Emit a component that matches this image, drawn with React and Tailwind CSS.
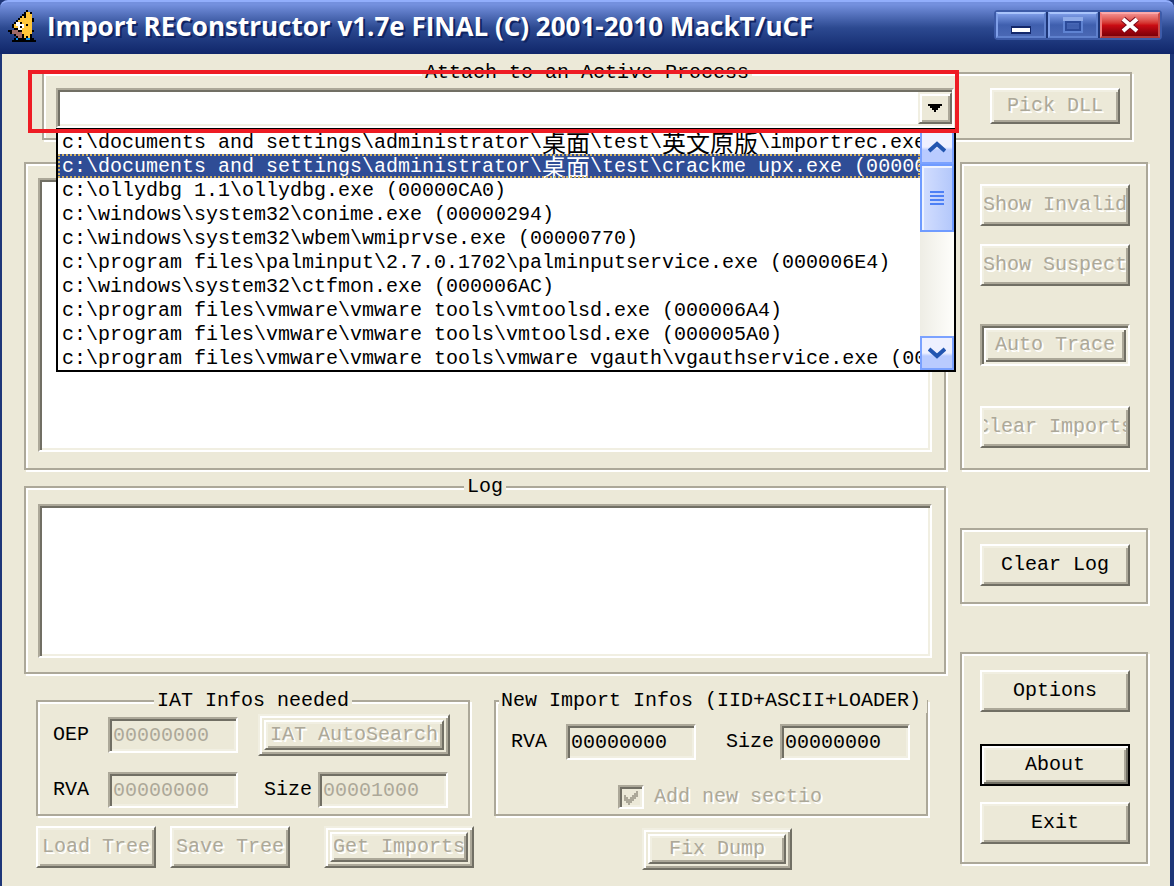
import clsx from "clsx";

const processes = [
  { path: ["c:\\documents and settings\\administrator\\", "桌面", "\\test\\", "英文原版", "\\importrec.exe"] },
  { path: ["c:\\documents and settings\\administrator\\", "桌面", "\\test\\crackme upx.exe (000005E8)"], selected: true },
  { path: ["c:\\ollydbg 1.1\\ollydbg.exe (00000CA0)"] },
  { path: ["c:\\windows\\system32\\conime.exe (00000294)"] },
  { path: ["c:\\windows\\system32\\wbem\\wmiprvse.exe (00000770)"] },
  { path: ["c:\\program files\\palminput\\2.7.0.1702\\palminputservice.exe (000006E4)"] },
  { path: ["c:\\windows\\system32\\ctfmon.exe (000006AC)"] },
  { path: ["c:\\program files\\vmware\\vmware tools\\vmtoolsd.exe (000006A4)"] },
  { path: ["c:\\program files\\vmware\\vmware tools\\vmtoolsd.exe (000005A0)"] },
  { path: ["c:\\program files\\vmware\\vmware tools\\vmware vgauth\\vgauthservice.exe (00000588)"] }
];

// Bevels
const etched = "border-2 border-[#aca899] shadow-[inset_2px_2px_0_#fff,2px_2px_0_#fff]";
const sunken =
  "border-2 border-t-[#aca899] border-l-[#aca899] border-r-white border-b-white shadow-[inset_2px_2px_0_#716f64,inset_-2px_-2px_0_#f1efe2]";
const raised =
  "border-2 border-t-white border-l-white border-r-[#716f64] border-b-[#716f64] shadow-[inset_2px_2px_0_#f1efe2,inset_-2px_-2px_0_#aca899]";
const raisedEdge =
  "border-2 border-t-[#f1efe2] border-l-[#f1efe2] border-r-[#716f64] border-b-[#716f64] shadow-[inset_2px_2px_0_#fff,inset_-2px_-2px_0_#aca899]";
const focused =
  "border-2 border-black shadow-[inset_2px_2px_0_#fff,inset_-2px_-2px_0_#716f64,inset_4px_4px_0_#f1efe2,inset_-4px_-4px_0_#aca899]";
const framed =
  "border-2 border-t-[#aca899] border-l-[#aca899] border-r-white border-b-white shadow-[inset_2px_2px_0_#716f64,inset_-2px_-2px_0_#f1efe2,inset_4px_4px_0_#fff,inset_-4px_-4px_0_#716f64,inset_6px_6px_0_#f1efe2,inset_-6px_-6px_0_#aca899]";

const disabledText = "text-[#aca899] [text-shadow:2px_2px_0_#fff]";

function Button({ children, disabled, bevel = raised, className }) {
  return (
    <button disabled={disabled} className={clsx("block bg-[#ece9d8] px-0.5", bevel, className)}>
      <span
        className={clsx(
          "flex justify-center overflow-hidden whitespace-nowrap leading-6",
          disabled && disabledText
        )}
      >
        <span className="shrink-0">{children}</span>
      </span>
    </button>
  );
}

// Button sitting inside an extra raised window edge
function EdgeButton({ children, className }) {
  return (
    <div className={clsx("h-[42px] p-1", raisedEdge, className)}>
      <Button disabled className="h-full w-full">
        {children}
      </Button>
    </div>
  );
}

function Group({ title, legendClass, className, children }) {
  return (
    <fieldset className={clsx("min-w-0", etched, className)}>
      <legend className={clsx("h-6 bg-[#ece9d8] text-center leading-6 whitespace-nowrap", legendClass)}>
        {title}
      </legend>
      {children}
    </fieldset>
  );
}

function Field({ id, label, value, disabled, labelClass }) {
  return (
    <>
      <label htmlFor={id} className={clsx("shrink-0", labelClass)}>
        {label}
      </label>
      <input
        id={id}
        defaultValue={value}
        disabled={disabled}
        className={clsx(
          "h-9 w-[130px] shrink-0 bg-[#ece9d8] px-[3px] outline-none",
          sunken,
          disabled && "text-[#aca899]"
        )}
      />
    </>
  );
}

const birdRows = [
  ".........K....",
  "........KYYK..",
  ".......KKYYY..",
  "......KYKYYY..",
  ".....KYYYYYYK.",
  "....KYYYYYYYK.",
  "...KWWKYYYYY..",
  "..KYWWWWYKYY..",
  "..KYYWKWYYYY..",
  "...KKWWYYYYY..",
  "KKPPPKKYYYYYK.",
  ".KPPPPPYYYYY..",
  "...KPPPKYYYK..",
  "....KPPKYKYK..",
  "...KBKKKKBBKK.",
  "..KKKKKKKKKKKK"
];
const birdColors = { K: "#000", Y: "#ffc63a", W: "#fff", P: "#a06a66", B: "#0a94f0" };

function BirdIcon() {
  return (
    <svg viewBox="0 0 14 16" className="h-8 w-7 shrink-0" shapeRendering="crispEdges" aria-hidden="true">
      {birdRows.flatMap((row, y) =>
        [...row].map((c, x) =>
          c === "." ? null : <rect key={`${x}-${y}`} x={x} y={y} width="1" height="1" fill={birdColors[c]} />
        )
      )}
    </svg>
  );
}

function TitleBar() {
  const blue =
    "flex h-[26px] w-[50px] items-center justify-center border-2 border-t-[#a9c4fb] border-r-[#5f80cc] border-b-[#5f80cc] border-l-[#7f9fe8] bg-linear-to-b from-[#7d9be6] via-[#3f5fae] to-[#4a68b4]";
  return (
    <header className="flex h-[54px] items-start rounded-t-lg border-t-2 border-[#92aefb] bg-linear-to-b from-[#7490de] from-5% via-[#2c4990] via-50% to-[#10266a] pt-2 pr-3 pl-2">
      <BirdIcon />
      <h1 className="ml-[11px] flex-1 font-['Open_Sans',sans-serif] text-[26px] leading-8 font-bold whitespace-nowrap text-white [text-shadow:2px_2px_0_#0f2462]">
        Import REConstructor v1.7e FINAL (C) 2001-2010 MackT/uCF
      </h1>
      <div className="flex gap-0.5 rounded-sm border-2 border-[#3d5ba8] bg-[#1c3577]">
        <button aria-label="Minimize" className={blue}>
          <svg viewBox="0 0 24 18" className="h-[18px] w-6 shrink-0" shapeRendering="crispEdges">
            <rect x="2" y="10" width="20" height="8" fill="#13286b" />
            <rect x="3" y="12" width="18" height="4" fill="#fff" />
          </svg>
        </button>
        <button aria-label="Maximize" disabled className={blue}>
          <svg viewBox="0 0 20 16" className="h-4 w-5 shrink-0" shapeRendering="crispEdges">
            <path d="M1 1h18v14H1z" fill="none" stroke="#5f83d2" strokeWidth="2" />
            <path d="M0 0h20v4H0z" fill="#8fabe8" />
            <path d="M3 5h14v8H3z" fill="none" stroke="#2c4b9a" strokeWidth="2" />
          </svg>
        </button>
        <button
          aria-label="Close"
          className="flex h-[26px] w-[60px] items-center justify-center border-2 border-t-[#fba8a8] border-r-[#c84a4a] border-b-[#b03838] border-l-[#f07878] bg-linear-to-b from-[#f08a8a] via-[#cc0c14] to-[#7c0008]"
        >
          <svg viewBox="0 0 20 18" className="h-[18px] w-5 shrink-0">
            <path d="M3 3l14 12M17 3L3 15" stroke="#7a0a1c" strokeWidth="6" />
            <path d="M3 3l14 12M17 3L3 15" stroke="#fff" strokeWidth="4" />
          </svg>
        </button>
      </div>
    </header>
  );
}

function ScrollButton({ down }) {
  return (
    <button
      aria-label={down ? "Scroll down" : "Scroll up"}
      className="flex h-[34px] w-full items-center justify-center border-2 border-[#7ba2ff] bg-linear-to-b from-[#eef0ff] from-50% to-[#b9cbff] to-60%"
    >
      <svg viewBox="0 0 18 12" className="h-3 w-[18px]">
        <path d={down ? "M1 2l8 7 8-7" : "M1 10l8-7 8 7"} fill="none" stroke="#2255b0" strokeWidth="4" />
      </svg>
    </button>
  );
}

function ProcessList() {
  return (
    <div className="absolute top-full left-0 -right-0.5 z-10 flex border-2 border-black bg-white">
      <ul role="listbox" aria-label="Processes" className="min-w-0 flex-1">
        {processes.map(({ path, selected }, i) => (
          <li
            key={i}
            role="option"
            aria-selected={!!selected}
            className={clsx(
              "flex h-6 overflow-hidden pt-px pl-1 leading-6 whitespace-pre",
              selected && "bg-[#2f4d96] text-white outline-2 -outline-offset-2 outline-dotted outline-[#d0b060]"
            )}
          >
            {path.map((part, j) => (
              <span
                key={j}
                className={clsx("shrink-0", j % 2 && "font-['Noto_Sans_CJK_SC',sans-serif] text-[24px]/[22px]")}
              >
                {part}
              </span>
            ))}
          </li>
        ))}
      </ul>
      <div className="flex w-[34px] flex-col bg-linear-to-r from-[#eeede5] to-[#fefefb]">
        <ScrollButton />
        <div className="flex h-[68px] flex-col items-center justify-center gap-0.5 border-2 border-[#6f9bff] bg-linear-to-r from-[#d3defe] to-[#b4c8fb] shadow-[inset_2px_2px_0_#eef3ff]">
          <span className="h-0.5 w-3.5 bg-[#4d80f5]" />
          <span className="h-0.5 w-3.5 bg-[#4d80f5]" />
          <span className="h-0.5 w-3.5 bg-[#4d80f5]" />
          <span className="h-0.5 w-3.5 bg-[#4d80f5]" />
        </div>
        <div className="flex-1" />
        <ScrollButton down />
      </div>
    </div>
  );
}

function AttachProcess() {
  return (
    <Group title="Attach to an Active Process" legendClass="mx-auto px-[3px]" className="mr-4 ml-[18px] pb-2.5">
      <div className="flex items-start gap-9 pt-[3px] pr-2.5 pl-3">
        <div className="relative h-10 flex-1">
          <select
            aria-label="Attach to an Active Process"
            defaultValue=""
            className={clsx("block h-10 w-full appearance-none bg-white", sunken)}
          >
            <option value=""></option>
          </select>
          <span
            className={clsx(
              "pointer-events-none absolute top-1 right-0.5 flex h-8 w-[34px] items-center justify-center bg-[#ece9d8]",
              raisedEdge
            )}
          >
            <svg viewBox="0 0 14 8" className="h-2 w-3.5" shapeRendering="crispEdges">
              <path d="M0 0h14v2h-2v2h-2v2H8v2H6V6H4V4H2V2H0z" />
            </svg>
          </span>
          <ProcessList />
          {/* red highlight round the combo box */}
          <div className="pointer-events-none absolute -top-[18px] -right-[5px] -bottom-[5px] -left-7 z-20 border-4 border-[#ee1c24]" />
        </div>
        <Button disabled className="h-9 w-[130px]">
          Pick DLL
        </Button>
      </div>
    </Group>
  );
}

function IatInfos() {
  return (
    <Group title="IAT Infos needed" legendClass="mx-auto px-[3px]" className="flex-1 pb-1.5">
      <div className="flex items-center pt-px pl-[15px]">
        <Field id="oep" label="OEP" value="00000000" disabled labelClass="w-[55px]" />
        <EdgeButton className="ml-5 w-48">IAT AutoSearch</EdgeButton>
      </div>
      <div className="mt-4 flex items-center pl-[15px]">
        <Field id="iat-rva" label="RVA" value="00000000" disabled labelClass="w-[55px]" />
        <Field id="iat-size" label="Size" value="00001000" disabled labelClass="ml-[26px] w-[54px]" />
      </div>
    </Group>
  );
}

function NewImportInfos() {
  return (
    <Group title="New Import Infos (IID+ASCII+LOADER)" legendClass="ml-0.5 w-[428px] pr-1" className="flex-1 pb-1">
      <div className="flex items-center pt-[11px] pl-[15px]">
        <Field id="new-rva" label="RVA" value="00000000" labelClass="w-[55px]" />
        <Field id="new-size" label="Size" value="00000000" labelClass="ml-[30px] w-[54px]" />
      </div>
      <label className={clsx("mt-6 flex h-[26px] items-center pl-[122px]", disabledText)}>
        <span className="relative mr-2.5 flex h-6 w-[26px]">
          <input type="checkbox" defaultChecked disabled className={clsx("h-6 w-[26px] appearance-none", sunken)} />
          <svg viewBox="0 0 14 14" className="absolute top-1.5 left-1.5 size-3.5" shapeRendering="crispEdges">
            <path d="M0 4h2v2h2v2h2V6h2V4h2V2h2V0h2v6h-2v2h-2v2H8v2H6v2H4v-2H2v-2H0z" fill="#aca899" />
          </svg>
        </span>
        Add new sectio
      </label>
    </Group>
  );
}

function SideButtons() {
  return (
    <div className="mt-[22px] flex w-[188px] shrink-0 flex-col">
      <div className={clsx("flex flex-col pt-5 pr-4 pb-5 pl-[18px]", etched)}>
        <Button disabled className="h-[42px] w-full">Show Invalid</Button>
        <Button disabled className="mt-[18px] h-[42px] w-full">Show Suspect</Button>
        <Button disabled bevel={framed} className="mt-[38px] h-[42px] w-full">Auto Trace</Button>
        <Button disabled className="mt-10 h-[42px] w-full">Clear Imports</Button>
      </div>
      <div className={clsx("mt-[58px] pt-3.5 pr-4 pb-4 pl-[18px]", etched)}>
        <Button className="h-[42px] w-full">Clear Log</Button>
      </div>
      <div className={clsx("mt-12 flex flex-col pt-4 pr-4 pb-[18px] pl-[18px]", etched)}>
        <Button className="h-[42px] w-full">Options</Button>
        <Button bevel={focused} className="mt-8 h-[42px] w-full">About</Button>
        <Button className="mt-4 h-[42px] w-full">Exit</Button>
      </div>
    </div>
  );
}

export default function App() {
  return (
    <div className="min-h-screen overflow-hidden bg-[#1e3678] font-['Liberation_Mono','Noto_Sans_CJK_SC',monospace] text-[20px] leading-6 text-black">
      <TitleBar />
      <main className="mr-1 ml-0.5 min-h-[832px] bg-[#ece9d8] px-[22px] pt-[7px]">
        <AttachProcess />
        <div className="flex gap-3.5">
          <div className="min-w-0 flex-1">
            <div className={clsx("mt-[22px] px-3 pt-3.5 pb-4", etched)}>
              <div className={clsx("h-[274px] bg-white", sunken)} />
            </div>
            <Group title="Log" legendClass="mx-auto px-[3px]" className="mt-[5px] px-3 pt-[5px] pb-3.5">
              <textarea
                aria-label="Log"
                readOnly
                className={clsx("block h-[154px] w-full resize-none bg-white outline-none", sunken)}
              />
            </Group>
            <div className="mt-[15px] flex gap-6 pr-[18px] pl-3">
              <IatInfos />
              <NewImportInfos />
            </div>
            <div className="mt-2.5 flex items-start pl-3">
              <Button disabled className="h-[42px] w-[120px]">Load Tree</Button>
              <Button disabled className="ml-3.5 h-[42px] w-[120px]">Save Tree</Button>
              <EdgeButton className="ml-[34px] w-[150px]">Get Imports</EdgeButton>
              <EdgeButton className="mt-0.5 ml-[168px] w-[150px]">Fix Dump</EdgeButton>
            </div>
          </div>
          <SideButtons />
        </div>
      </main>
    </div>
  );
}
